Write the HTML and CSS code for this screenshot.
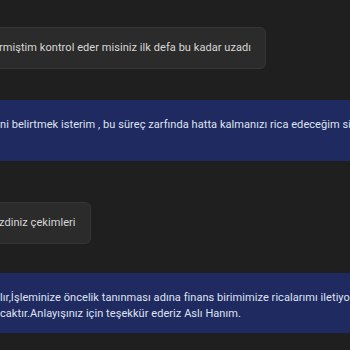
FILE: index.html
```html
<!DOCTYPE html>
<html lang="tr">
<head>
  <meta charset="UTF-8">
  <title>Destek Sohbeti</title>
  <link rel="stylesheet" href="styles.css">
</head>
<body>
  <div class="chat">
    <!-- Customer message -->
    <div class="row">
      <div class="bubble">rmiştim kontrol eder misiniz ilk defa bu kadar uzadı</div>
    </div>

    <!-- Agent message -->
    <div class="agent">
      <p>ni belirtmek isterim , bu süreç zarfında hatta kalmanızı rica edeceğim sizi</p>
      <p>&nbsp;</p>
    </div>

    <div class="row second">
      <div class="bubble">zdiniz çekimleri</div>
    </div>

    <div class="agent last">
      <p>lır,İşleminize öncelik tanınması adına finans birimimize ricalarımı iletiyorum</p>
      <p>caktır.Anlayışınız için teşekkür ederiz Aslı Hanım.</p>
    </div>
  </div>
</body>
</html>
```

FILE: styles.css
```css
body {
  margin: 0;
  background-color: #1f1f1f;
  font-family: Roboto, "Noto Sans", Arial, sans-serif;
  font-size: 11px;
  letter-spacing: 0.06px;
  overflow: hidden;
}
.chat {
  padding-top: 27px;
}
/* Customer bubbles, cut off on the left */
.row {
  display: flex;
}
.bubble {
  margin-left: -12px;
  padding: 12px 14px 12px 11px;
  line-height: 16px;
  color: #d8d8d8;
  background-color: #2b2b2b;
  border: 1px solid #353535;
  border-left: none;
  border-radius: 6px;
  white-space: nowrap;
}
.row.second {
  margin-top: 41px;
}
.row.second .bubble {
  padding-bottom: 12px;
}
/* Agent replies, full-width blue bands */
.agent {
  margin-top: 31px;
  padding: 17px 0 12px 0;
  background-color: #1f2a60;
  color: #dfe3f1;
  white-space: nowrap;
  overflow: hidden;
}
.agent p {
  margin: 0;
  line-height: 16px;
}
.agent.last {
  margin-top: 29px;
  padding-bottom: 11px;
}
```
